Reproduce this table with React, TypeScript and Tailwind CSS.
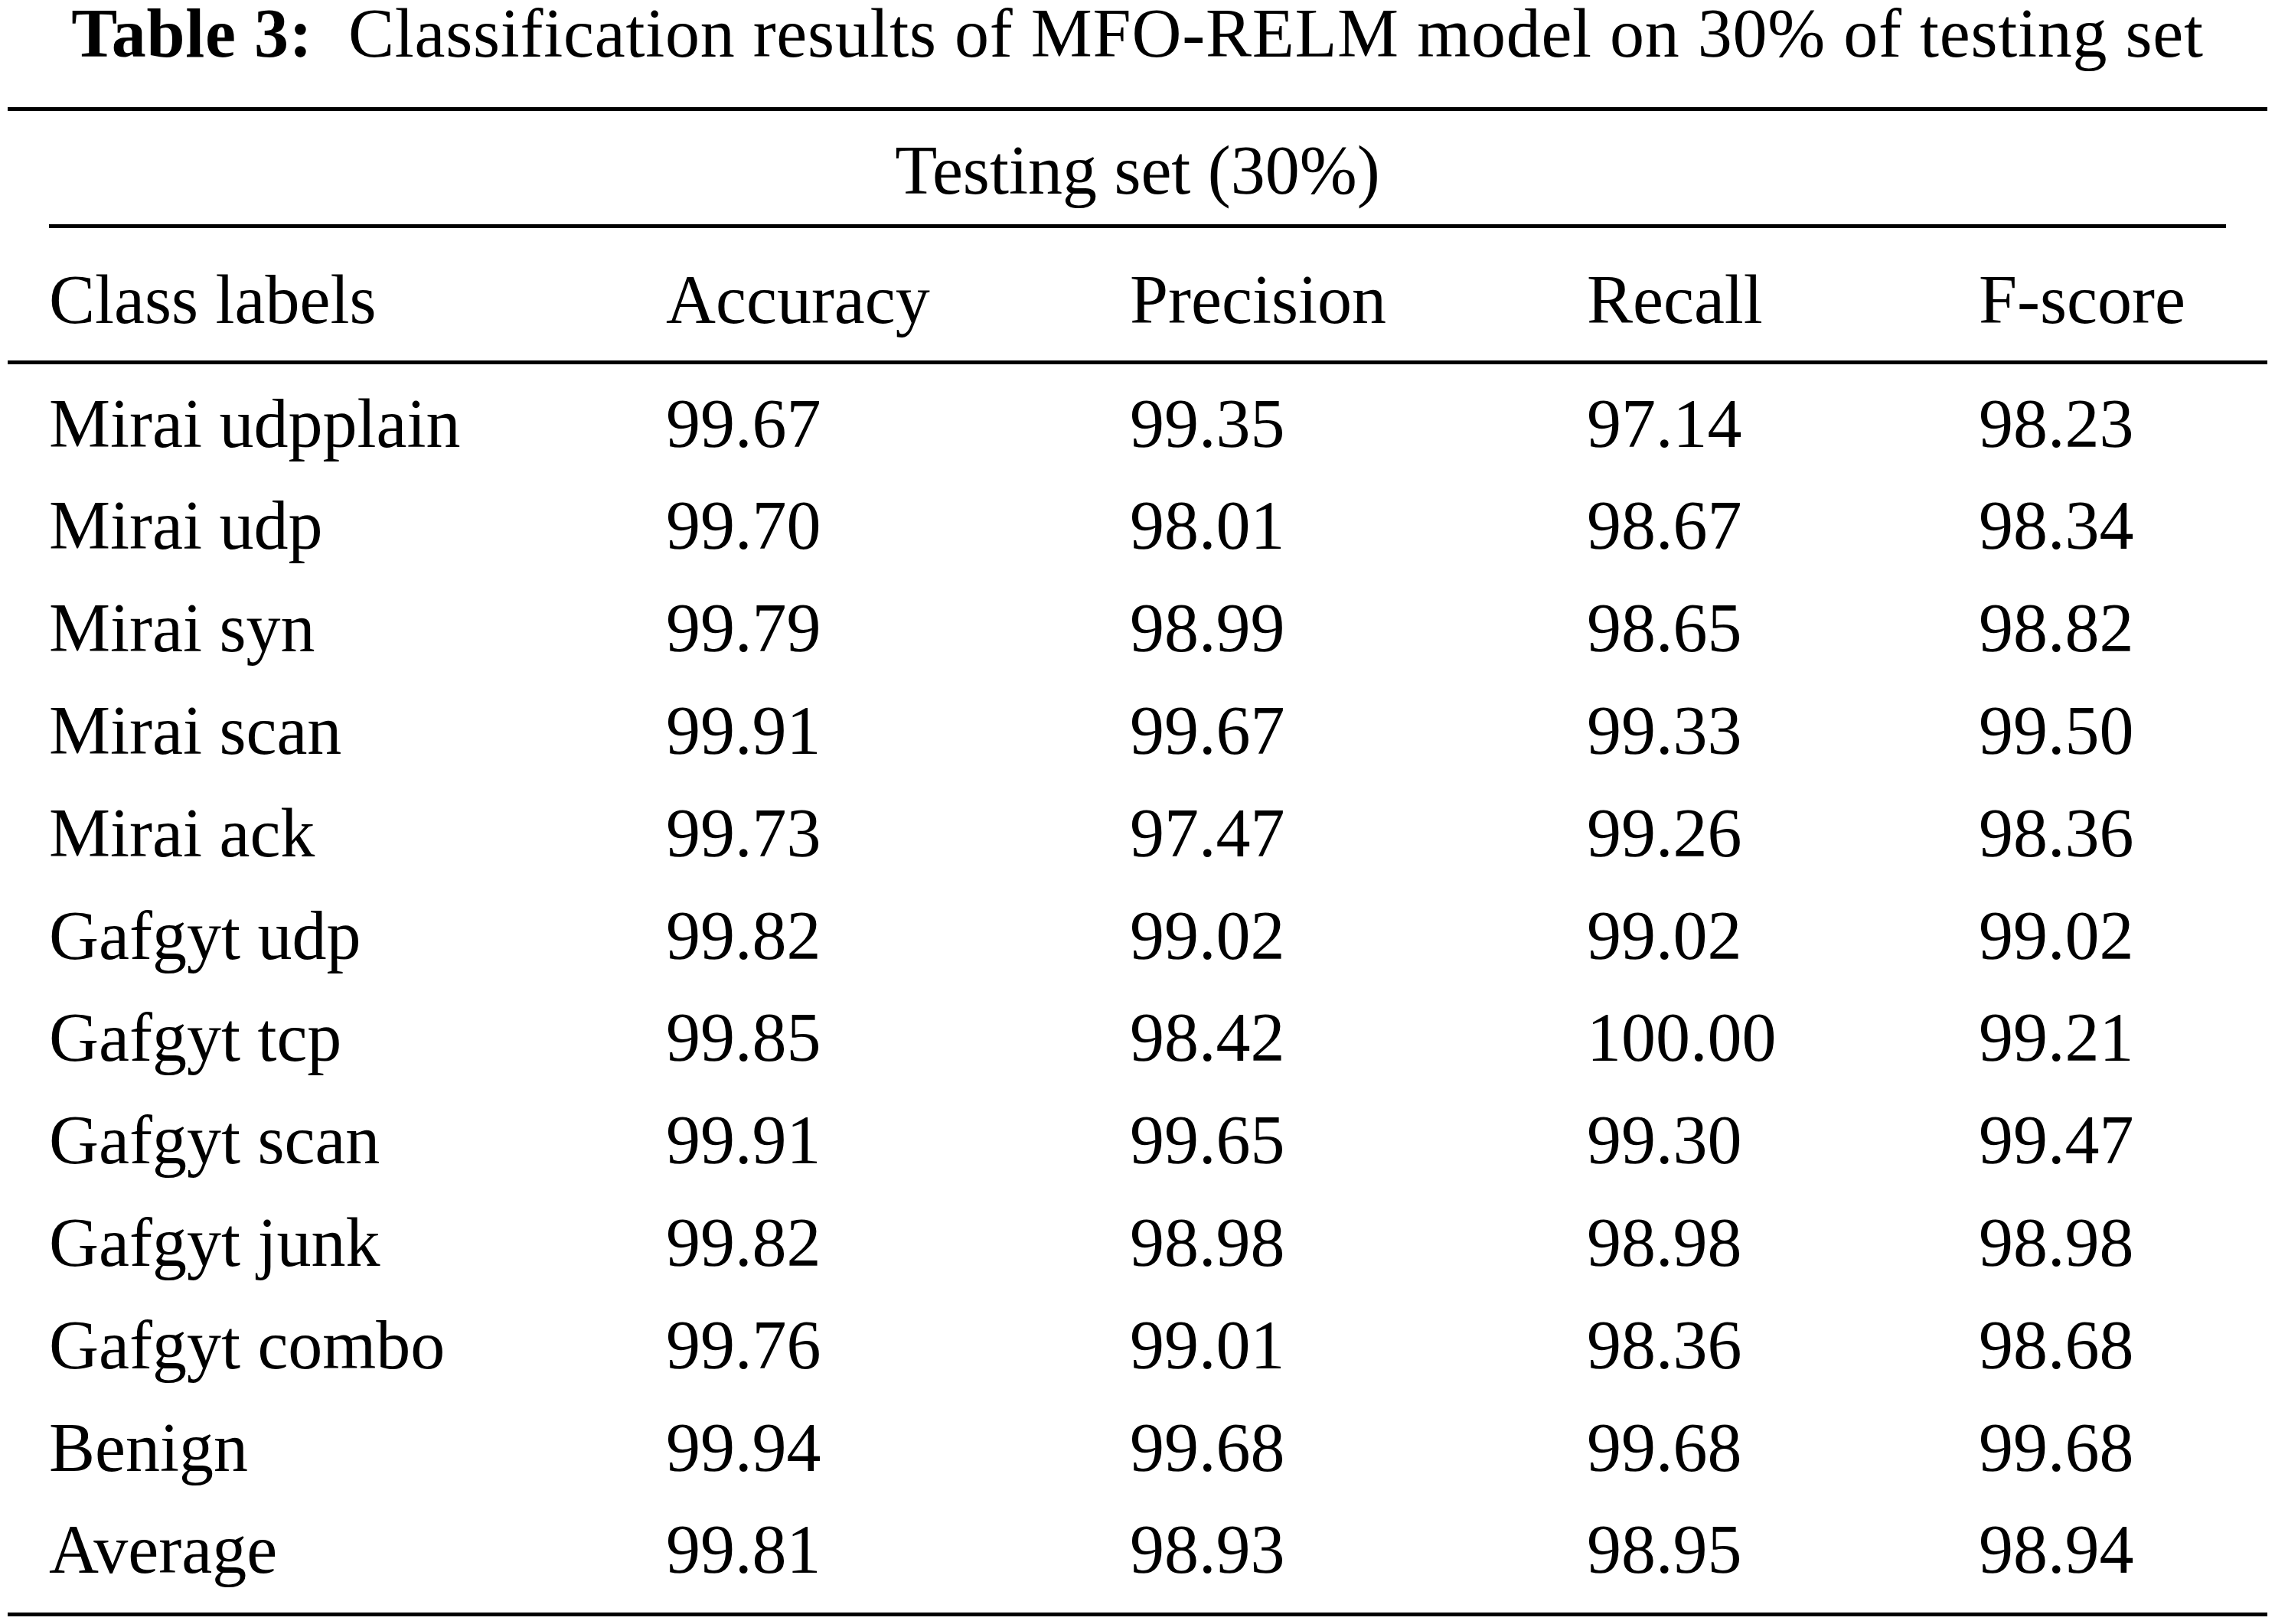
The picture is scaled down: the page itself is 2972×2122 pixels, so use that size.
import React from "react";

const rows: [string, string, string, string, string][] = [
  ["Mirai udpplain", "99.67", "99.35", "97.14", "98.23"],
  ["Mirai udp", "99.70", "98.01", "98.67", "98.34"],
  ["Mirai syn", "99.79", "98.99", "98.65", "98.82"],
  ["Mirai scan", "99.91", "99.67", "99.33", "99.50"],
  ["Mirai ack", "99.73", "97.47", "99.26", "98.36"],
  ["Gafgyt udp", "99.82", "99.02", "99.02", "99.02"],
  ["Gafgyt tcp", "99.85", "98.42", "100.00", "99.21"],
  ["Gafgyt scan", "99.91", "99.65", "99.30", "99.47"],
  ["Gafgyt junk", "99.82", "98.98", "98.98", "98.98"],
  ["Gafgyt combo", "99.76", "99.01", "98.36", "98.68"],
  ["Benign", "99.94", "99.68", "99.68", "99.68"],
  ["Average", "99.81", "98.93", "98.95", "98.94"],
];

const headers = ["Class labels", "Accuracy", "Precision", "Recall", "F-score"];

export default function App() {
  return (
    <div
      className="w-[2972px] h-[2122px] bg-white text-black text-[90px] whitespace-nowrap"
      style={{ fontFamily: '"Liberation Serif", "Times New Roman", serif' }}
    >
      {/* Title */}
      <div className="h-[140px] pt-[8px] text-center leading-[71.2px] tracking-[0.75px]">
        <span className="font-bold">Table 3:</span>
        {"\u00a0 "}Classification results of MFO-RELM model on 30% of testing set
      </div>

      <div className="mx-[10px] border-t-[5px] border-black">
        {/* Spanning header */}
        <div className="mx-[54px] h-[153px] pt-[6.6px] leading-[141.4px] text-center border-b-[5px] border-black">
          Testing set (30%)
        </div>

        {/* Column headers */}
        <div className="px-[54px] h-[178px] pt-[16.2px] border-b-[5px] border-black">
          <div className="grid grid-cols-[806px_606px_597px_512px_1fr] leading-[156.8px]">
            {headers.map((h) => (
              <div key={h}>{h}</div>
            ))}
          </div>
        </div>

        {/* Body */}
        <div className="px-[54px] pt-[10.7px] pb-[14.5px] border-b-[5px] border-black">
          {rows.map((r) => (
            <div
              key={r[0]}
              className="grid grid-cols-[806px_606px_597px_512px_1fr] h-[133.8px] leading-[133.8px]"
            >
              {r.map((c, i) => (
                <div key={i}>{c}</div>
              ))}
            </div>
          ))}
        </div>
      </div>
    </div>
  );
}
